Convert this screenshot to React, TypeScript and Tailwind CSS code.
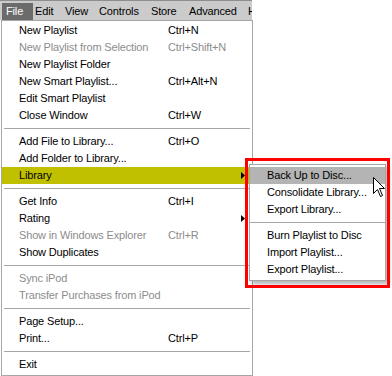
import React from "react";

type Item = {
  label: string;
  shortcut?: string;
  disabled?: boolean;
  submenu?: boolean;
  active?: boolean;
};

const groups: Item[][] = [
  [
    { label: "New Playlist", shortcut: "Ctrl+N" },
    { label: "New Playlist from Selection", shortcut: "Ctrl+Shift+N", disabled: true },
    { label: "New Playlist Folder" },
    { label: "New Smart Playlist...", shortcut: "Ctrl+Alt+N" },
    { label: "Edit Smart Playlist" },
    { label: "Close Window", shortcut: "Ctrl+W" },
  ],
  [
    { label: "Add File to Library...", shortcut: "Ctrl+O" },
    { label: "Add Folder to Library..." },
    { label: "Library", submenu: true, active: true },
  ],
  [
    { label: "Get Info", shortcut: "Ctrl+I" },
    { label: "Rating", submenu: true },
    { label: "Show in Windows Explorer", shortcut: "Ctrl+R", disabled: true },
    { label: "Show Duplicates" },
  ],
  [
    { label: "Sync iPod", disabled: true },
    { label: "Transfer Purchases from iPod", disabled: true },
  ],
  [
    { label: "Page Setup..." },
    { label: "Print...", shortcut: "Ctrl+P" },
  ],
  [{ label: "Exit" }],
];

const libraryGroups: Item[][] = [
  [
    { label: "Back Up to Disc...", active: true },
    { label: "Consolidate Library..." },
    { label: "Export Library..." },
  ],
  [
    { label: "Burn Playlist to Disc" },
    { label: "Import Playlist..." },
    { label: "Export Playlist..." },
  ],
];

const bar = [
  { label: "File", w: "w-[31px] pl-[4px]", active: true },
  { label: "Edit", w: "w-[30px] pl-[2px]" },
  { label: "View", w: "w-[34px] pl-[2px]" },
  { label: "Controls", w: "w-[52px] pl-[2px]" },
  { label: "Store", w: "w-[38px] pl-[2px]" },
  { label: "Advanced", w: "w-[59px] pl-[2px]" },
  { label: "Help", w: "w-[40px] pl-[2px]" },
];

function Arrow() {
  return (
    <svg width="4" height="7" viewBox="0 0 4 7" className="block">
      <path d="M0 0 L4 3.5 L0 7 Z" fill="#000" />
    </svg>
  );
}

function Separator() {
  return (
    <div className="h-[9px] flex items-center mx-[2px]">
      <div className="h-px w-full bg-[#a6a6a6]" />
    </div>
  );
}

function MainRow({ item }: { item: Item }) {
  return (
    <div
      className={`h-[17px] leading-[17px] flex items-center pl-[17px] pr-[7px] ${
        item.active ? "bg-[#c0c000]" : ""
      } ${item.disabled ? "text-[#8c8c8c]" : "text-black"}`}
    >
      <span className="w-[149px] whitespace-nowrap">{item.label}</span>
      <span className="flex-1 whitespace-nowrap">{item.shortcut}</span>
      {item.submenu && <Arrow />}
    </div>
  );
}

function SubRow({ item }: { item: Item }) {
  return (
    <div
      className={`h-[17px] leading-[17px] pl-[17px] whitespace-nowrap text-black ${
        item.active ? "bg-[#b4b4b4]" : ""
      }`}
    >
      {item.label}
    </div>
  );
}

function Cursor() {
  return (
    <svg width="13" height="21" viewBox="0 0 13 21" className="block">
      <path
        d="M0.5 0.5 L0.5 16.5 L4.5 12.5 L7.5 19.5 L9.5 18.5 L6.5 11.5 L11.5 11.5 Z"
        fill="#fff"
        stroke="#000"
        strokeWidth="1"
        strokeLinejoin="miter"
      />
    </svg>
  );
}

export default function App() {
  return (
    <div
      className="relative w-[392px] h-[376px] bg-white overflow-hidden text-[11px] tracking-[-0.15px]"
      style={{ fontFamily: '"Liberation Sans", Arial, sans-serif' }}
    >
      {/* menu bar */}
      <div className="w-[252px] h-[20px] bg-[#cbcbcb] border-t border-[#8e8e8e] flex pl-[2px] pt-[2px] overflow-hidden">
        {bar.map((b) => (
          <div
            key={b.label}
            className={`${b.w} shrink-0 h-[17px] leading-[16px] whitespace-nowrap ${
              b.active ? "bg-[#6b6b6b] text-white" : "text-black"
            }`}
          >
            {b.label}
          </div>
        ))}
      </div>

      {/* File dropdown */}
      <div className="ml-px w-[252px] h-[356px] border border-[#a6a6a6] py-px">
        {groups.map((g, gi) => (
          <div key={gi}>
            {gi > 0 && <Separator />}
            {g.map((it) => (
              <MainRow key={it.label} item={it} />
            ))}
          </div>
        ))}
      </div>

      {/* Library submenu */}
      <div className="absolute left-[249px] top-[164px] w-[137px] bg-white border border-[#a6a6a6] py-[2px] shadow-[3px_3px_4px_rgba(0,0,0,0.3)]">
        {libraryGroups.map((g, gi) => (
          <div key={gi}>
            {gi > 0 && (
              <div className="h-[9px] flex items-center">
                <div className="h-px w-full bg-[#a6a6a6]" />
              </div>
            )}
            {g.map((it) => (
              <SubRow key={it.label} item={it} />
            ))}
          </div>
        ))}
      </div>

      {/* annotation box */}
      <div className="absolute left-[245px] top-[158px] w-[145px] h-[130px] border-[3px] border-[#f00]" />

      {/* mouse pointer */}
      <div className="absolute left-[373px] top-[177px]">
        <Cursor />
      </div>
    </div>
  );
}
